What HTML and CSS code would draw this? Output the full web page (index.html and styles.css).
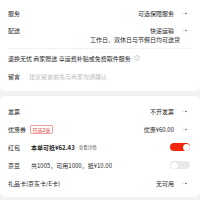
FILE: index.html
```html
<!DOCTYPE html>
<html>
<head>
<meta charset="utf-8">
<link rel="stylesheet" href="styles.css">
</head>
<body>
<div class="card card-top">
  <div class="row">
    <span class="label">服务</span>
    <span class="right">可选保障服务<svg class="more" width="8" height="3" viewBox="0 0 8 3"><circle cx="1.2" cy="1.5" r="0.6" fill="#ccc"/><circle cx="4" cy="1.5" r="0.8" fill="#555"/><circle cx="6.8" cy="1.5" r="0.6" fill="#ddd"/></svg></span>
  </div>
  <div class="row row-tall">
    <span class="label top">配送</span>
    <div class="right-col">
      <span class="right">快递运输<svg class="more" width="8" height="3" viewBox="0 0 8 3"><circle cx="1.2" cy="1.5" r="0.6" fill="#ccc"/><circle cx="4" cy="1.5" r="0.8" fill="#555"/><circle cx="6.8" cy="1.5" r="0.6" fill="#ddd"/></svg></span>
      <span class="sub">工作日、双休日与节假日均可送货</span>
    </div>
  </div>
  <div class="divider"></div>
  <div class="row">
    <span class="label">退换无忧 商家赠送 享运费补贴或免费取件服务</span>
    <svg class="info" width="6" height="6" viewBox="0 0 6 6"><circle cx="3" cy="3" r="2.5" fill="none" stroke="#aaa" stroke-width="0.5"/><rect x="2.75" y="2.5" width="0.5" height="2" fill="#aaa"/><rect x="2.75" y="1.5" width="0.5" height="0.5" fill="#aaa"/></svg>
  </div>
  <div class="row">
    <span class="label">留言</span>
    <span class="placeholder">建议留言前先与商家沟通确认</span>
  </div>
</div>
<div class="card card-bottom">
  <div class="row">
    <span class="label">发票</span>
    <span class="right">不开发票<svg class="more" width="8" height="3" viewBox="0 0 8 3"><circle cx="1.2" cy="1.5" r="0.6" fill="#ccc"/><circle cx="4" cy="1.5" r="0.8" fill="#555"/><circle cx="6.8" cy="1.5" r="0.6" fill="#ddd"/></svg></span>
  </div>
  <div class="row">
    <span class="label">优惠券</span>
    <span class="badge">已选2张</span>
    <span class="right">优惠¥60.00<svg class="more" width="8" height="3" viewBox="0 0 8 3"><circle cx="1.2" cy="1.5" r="0.6" fill="#ccc"/><circle cx="4" cy="1.5" r="0.8" fill="#555"/><circle cx="6.8" cy="1.5" r="0.6" fill="#ddd"/></svg></span>
  </div>
  <div class="row">
    <span class="label">红包</span>
    <span class="value bold">本单可抵¥62.43</span>
    <span class="detail">查看详情</span>
    <span class="toggle on"><span class="knob"></span></span>
  </div>
  <div class="row">
    <span class="label">京豆</span>
    <span class="value">共1005，可用1000，抵¥10.00</span>
    <span class="toggle off"><span class="knob"></span></span>
  </div>
  <div class="row">
    <span class="label">礼品卡(京东卡/E卡)</span>
    <span class="right">无可用<svg class="more" width="8" height="3" viewBox="0 0 8 3"><circle cx="1.2" cy="1.5" r="0.6" fill="#ccc"/><circle cx="4" cy="1.5" r="0.8" fill="#555"/><circle cx="6.8" cy="1.5" r="0.6" fill="#ddd"/></svg></span>
  </div>
</div>
</body>
</html>
```
FILE: styles.css
```css
html, body {
  margin: 0;
  padding: 0;
}
body {
  background: #f2f2f2;
  font-family: "Noto Sans CJK SC", "Noto Sans", sans-serif;
  font-size: 6px;
  color: #262626;
  width: 200px;
  height: 200px;
  overflow: hidden;
}
.card {
  background: #fff;
  border-radius: 6px;
}
.card-top {
  padding: 4px 0 6px;
  border-radius: 0 0 6px 6px;
}
.card-bottom {
  margin-top: 5px;
  padding: 6px 0 5px;
}
.row {
  display: flex;
  align-items: center;
  height: 18px;
  padding: 0 10px 0 8px;
}
.row-tall {
  height: 26px;
  align-items: flex-start;
  padding-top: 4px;
  box-sizing: border-box;
}
.label {
  white-space: nowrap;
}
.right {
  margin-left: auto;
  display: flex;
  align-items: center;
  white-space: nowrap;
}
.right-col {
  margin-left: auto;
  display: flex;
  flex-direction: column;
  align-items: flex-end;
  line-height: 9px;
}
.sub {
  margin-right: 10px;
}
.more {
  margin-left: 8px;
}
.divider {
  height: 1px;
  background: #f3f3f3;
  margin: 0 8px;
}
.info {
  margin-left: 3px;
}
.placeholder {
  color: #bdbdbd;
  margin-left: 9px;
}
.badge {
  margin-left: 4px;
  border: 0.5px solid #f2a0a0;
  color: #e4393c;
  font-size: 5px;
  line-height: 7px;
  padding: 0 1.5px;
  border-radius: 1px;
}
.value {
  margin-left: 11px;
}
.bold {
  font-weight: 700;
}
.detail {
  margin-left: 4px;
  font-size: 4.5px;
  color: #666;
}
.toggle {
  margin-left: auto;
  width: 20px;
  height: 8px;
  border-radius: 4px;
  position: relative;
  margin-right: 0;
}
.toggle.on {
  background: #f2270c;
}
.toggle.off {
  background: #e8e8e8;
}
.knob {
  position: absolute;
  top: 0.5px;
  width: 7px;
  height: 7px;
  border-radius: 50%;
  background: #fff;
  box-shadow: 0 0 1px rgba(0,0,0,0.2);
}
.on .knob {
  right: 0.5px;
}
.off .knob {
  left: 0.5px;
}
```
